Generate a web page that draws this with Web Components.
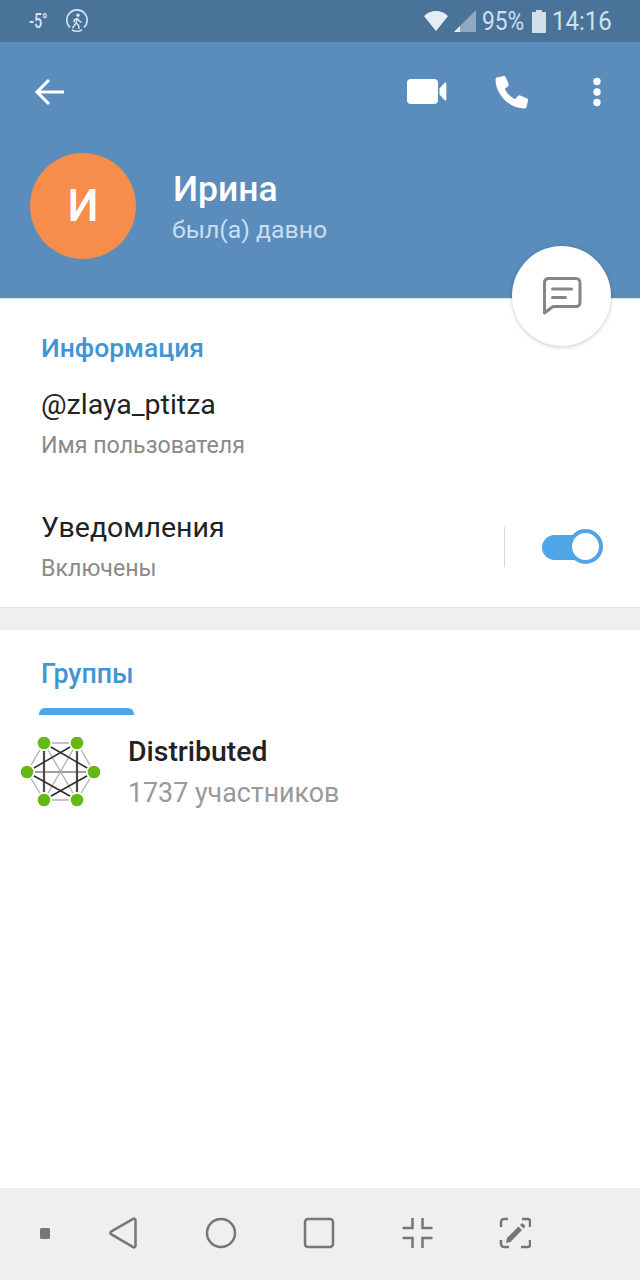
<!DOCTYPE html>
<html>
<head>
<meta charset="utf-8">
<title>Профиль</title>
<style>
	html, body { margin: 0; padding: 0; }
	body {
		width: 640px;
		height: 1280px;
		display: flex;
		flex-direction: column;
		overflow: hidden;
		background: #efefef;
		font-family: Roboto, "Liberation Sans", sans-serif;
	}
	tg-section { flex: none; }
	#groups { flex: 1; }
</style>
</head>
<body>
<tg-status></tg-status>
<tg-header name="Ирина" status="был(а) давно" initial="И"></tg-header>
<tg-section id="info" title="Информация">
	<tg-row label="@zlaya_ptitza" hint="Имя пользователя"></tg-row>
	<tg-row class="notify" label="Уведомления" hint="Включены"><tg-toggle></tg-toggle></tg-row>
</tg-section>
<tg-groups id="groups"></tg-groups>
<tg-nav></tg-nav>

<script>
// Status bar at the top of the phone.
class TgStatus extends HTMLElement {
	constructor() {
		super();
		const shadow = this.attachShadow({mode: 'open'});
		shadow.innerHTML = `
			<style>
				:host { display: flex; flex: none; align-items: center; height: 42px; background: #497399; color: #cfe0ee; padding: 0 28px 0 29px; box-sizing: border-box; }
				.temp { font-size: 20px; font-weight: 500; transform: scaleX(.72); transform-origin: left; width: 36px; color: #d7e4ef; white-space: nowrap; }
				.right { margin-left: auto; display: flex; align-items: center; }
				.pct { font-size: 25px; margin-left: 6px; transform: scaleX(.91); transform-origin: left; width: 42px; white-space: nowrap; }
				.time { font-size: 25px; margin-left: 6px; width: 60px; transform: scaleX(.96); transform-origin: left; white-space: nowrap; }
				svg { display: block; }
			</style>
			<span class="temp">-5°</span>
			<svg width="24" height="24" viewBox="0 0 24 24" fill="none" stroke="#d7e4ef">
				<path d="M5 18.500A10.200 10.200 0 1 1 19 18.500" stroke-width="1.600"/>
				<path d="M7 21a11 11 0 0 0 10 0" stroke-width="1.600"/>
				<circle cx="13" cy="6.200" r="1.700" fill="#d7e4ef" stroke="none"/>
				<path d="M12.500 9l-1.500 5 2.500 2.200.6 3.800M11 14l-1.600 2.400-2 2.600M12.300 9.500l-2.800 1.400-.8 2.400M12.800 9.800l1.400 2.400 2.300 1" stroke-width="1.500"/>
			</svg>
			<div class="right">
				<svg width="24" height="20" viewBox="0 0 24 20"><path d="M.5 5C3.500 2 7.500 .5 12 .5S20.500 2 23.500 5L12 19.500z" fill="#e6eef5" stroke="#e6eef5" stroke-linejoin="round"/></svg>
				<svg width="22" height="22" viewBox="0 0 22 22" style="margin-left:6px"><path d="M22 0v22H0z" fill="#90a9c1"/><path d="M6 16v6H0z" fill="#e6eef5"/></svg>
				<span class="pct">95%</span>
				<svg style="margin-left:8px" width="14" height="23" viewBox="0 0 14 23"><path d="M4 0h6v2h3a1 1 0 0 1 1 1v19a1 1 0 0 1-1 1H1a1 1 0 0 1-1-1V3a1 1 0 0 1 1-1h3z" fill="#d3e0eb"/></svg>
				<span class="time">14:16</span>
			</div>
		`;
	}
}

// Blue header with the avatar, plus the round message button over its edge.
class TgHeader extends HTMLElement {
	constructor() {
		super();
		const shadow = this.attachShadow({mode: 'open'});
		shadow.innerHTML = `
			<style>
				:host { display: block; flex: none; position: relative; height: 256px; background: #5a8dbc; box-shadow: 0 1px 1px rgba(0,0,0,.1); z-index: 1; }
				.bar { display: flex; align-items: center; height: 100px; padding: 0 38px 0 34px; }
				.bar svg { display: block; }
				.actions { margin-left: auto; display: flex; align-items: center; }
				.who { display: flex; align-items: center; padding: 11px 0 0 30px; }
				.avatar { width: 106px; height: 106px; border-radius: 50%; background: #f68d4a; color: #fff; display: flex; align-items: center; justify-content: center; font-size: 44px; font-weight: 500; }
				.text { margin-left: 37px; margin-top: 2px; }
				.name { font-size: 35.500px; font-weight: 500; line-height: 40px; color: #fff; }
				.status { font-size: 24.800px; line-height: 32px; color: #c9def0; margin-top: 5px; margin-left: -1px; }
				.fab { position: absolute; left: 512px; top: 204px; width: 99px; height: 100px; border-radius: 50%; background: #fff; box-shadow: 0 1px 4px rgba(0,0,0,.22); display: flex; align-items: center; justify-content: center; }
			</style>
			<div class="bar">
				<svg width="30" height="28" viewBox="0 0 30 28" fill="none" stroke="#fff" stroke-width="3"><path d="M30 14H4M15 2 3 14 15 26"/></svg>
				<div class="actions">
					<svg width="40" height="26" viewBox="0 0 40 26" fill="#fff"><rect x="0" y="0" width="31" height="25" rx="4"/><path d="M32.500 9.500 38 3.600a1 1 0 0 1 1.300 .8v16.200a1 1 0 0 1-1.300 .8l-5.500-5.900z"/></svg>
					<svg style="margin-left:47px" width="36" height="36" viewBox="0 0 36 36" fill="#fff"><path d="M3 3.500 9.500 2a2 2 0 0 1 2.200 1.200l2.900 6.800a2 2 0 0 1-.5 2.200l-3.300 2.800a23 23 0 0 0 10.300 10.300l2.800-3.400a2 2 0 0 1 2.200-.5l6.700 2.900a2 2 0 0 1 1.200 2.200l-1.500 6.500a2 2 0 0 1-2 1.500C15.500 34.500 1.500 20.500 1.500 5.500a2 2 0 0 1 1.500-2z"/></svg>
					<svg style="margin-left:62px" width="10" height="30" viewBox="0 0 10 30" fill="#fff"><circle cx="5" cy="4.500" r="3.700"/><circle cx="5" cy="15" r="3.700"/><circle cx="5" cy="25.500" r="3.700"/></svg>
				</div>
			</div>
			<div class="who">
				<div class="avatar">${this.getAttribute('initial')}</div>
				<div class="text">
					<div class="name">${this.getAttribute('name')}</div>
					<div class="status">${this.getAttribute('status')}</div>
				</div>
			</div>
			<div class="fab">
				<svg width="40" height="38" viewBox="0 0 40 38" fill="none" stroke="#868686" stroke-width="3" stroke-linejoin="round" stroke-linecap="round">
					<path d="M6 2h28a4 4 0 0 1 4 4v20a4 4 0 0 1-4 4H11l-8.500 6.500V6A4 4 0 0 1 6 2z" transform="translate(0 -.5)"/>
					<path d="M10.500 12h19M10.500 20.500h13"/>
				</svg>
			</div>
		`;
	}
}

// White card with a blue heading.
class TgSection extends HTMLElement {
	constructor() {
		super();
		const shadow = this.attachShadow({mode: 'open'});
		shadow.innerHTML = `
			<style>
				:host { display: block; height: 310px; background: #fff; border-bottom: 1px solid #e2e2e2; box-sizing: border-box; padding-top: 33px; overflow: hidden; }
				h2 { margin: 0 0 1px 41px; font-size: 26.500px; line-height: 34px; font-weight: 500; color: #3f96d4; }
			</style>
			<h2>${this.getAttribute('title')}</h2>
			<slot></slot>
		`;
	}
}

// Two line row, optional control on the right.
class TgRow extends HTMLElement {
	constructor() {
		super();
		const shadow = this.attachShadow({mode: 'open'});
		shadow.innerHTML = `
			<style>
				:host { display: flex; align-items: center; height: 123px; padding-left: 41px; box-sizing: border-box; }
				.label { font-size: 28.500px; line-height: 36px; color: #222; padding-top: 21px; }
				.hint { font-size: 23.200px; line-height: 30px; color: #8a8a8a; margin-top: 7px; }
				.text { flex: 1; align-self: flex-start; }
				.ctl { flex: none; }
			</style>
			<div class="text">
				<div class="label">${this.getAttribute('label')}</div>
				<div class="hint">${this.getAttribute('hint')}</div>
			</div>
			<div class="ctl"><slot></slot></div>
		`;
	}
}

// Divider and on/off switch of the notification row.
class TgToggle extends HTMLElement {
	constructor() {
		super();
		const shadow = this.attachShadow({mode: 'open'});
		shadow.innerHTML = `
			<style>
				:host { display: flex; align-items: center; height: 40px; padding-right: 37px; margin-top: -7px; }
				.sep { width: 1px; height: 40px; background: #d8d8d8; margin-right: 37px; }
				.track { position: relative; width: 50px; height: 25px; border-radius: 13px; background: #4fa6e6; margin-right: 11px; }
				.knob { position: absolute; right: -11px; top: -6px; width: 27px; height: 27px; border: 4px solid #4fa6e6; border-radius: 50%; background: #fff; }
			</style>
			<div class="sep"></div>
			<div class="track"><div class="knob"></div></div>
		`;
	}
}

// Hexagon graph used as the group picture.
class TgGraphLogo extends HTMLElement {
	constructor() {
		super();
		const shadow = this.attachShadow({mode: 'open'});
		const pts = [[23, 6], [56, 6], [73, 35], [56, 63], [23, 63], [6, 35]];
		const dark = [[0, 2], [1, 5], [2, 4], [3, 5]];
		const mid = [[0, 4], [1, 3]];
		const light = [[0, 1], [1, 2], [2, 3], [3, 4], [4, 5], [5, 0], [0, 3], [1, 4]];
		const line = (p, color, w) => `<line x1="${pts[p[0]][0]}" y1="${pts[p[0]][1]}" x2="${pts[p[1]][0]}" y2="${pts[p[1]][1]}" stroke="${color}" stroke-width="${w}"/>`;
		shadow.innerHTML = `
			<style>
				:host { display: block; width: 79px; height: 70px; }
				svg { display: block; }
			</style>
			<svg width="79" height="70" viewBox="0 0 79 70">
				${light.map(p => line(p, '#b0b0b0', 1.3)).join('')}
				${line([5, 2], '#a0a0a0', 2)}
				${mid.map(p => line(p, '#4a4a4a', 2.2)).join('')}
				${dark.map(p => line(p, '#2c2c2c', 1.5)).join('')}
				${pts.map(p => `<circle cx="${p[0]}" cy="${p[1]}" r="8" fill="#fff"/><circle cx="${p[0]}" cy="${p[1]}" r="6.300" fill="#66b814"/>`).join('')}
			</svg>
		`;
	}
}

// Groups tab with the list under it.
class TgGroups extends HTMLElement {
	constructor() {
		super();
		const shadow = this.attachShadow({mode: 'open'});
		shadow.innerHTML = `
			<style>
				:host { display: block; background: #fff; margin-top: 22px; }
				.tab { margin: 0 0 0 39px; width: 95px; height: 85px; box-sizing: border-box; padding: 27px 0 0 2px; font-size: 26.800px; line-height: 34px; font-weight: 500; color: #3f96d4; position: relative; white-space: nowrap; }
				.tab::after { content: ""; position: absolute; left: 0; right: 0; bottom: 0; height: 7px; background: #4fa6e6; border-radius: 6px 6px 0 0; }
				.group { display: flex; padding: 22px 0 0 21px; }
				.text { margin-left: 28px; margin-top: -3px; }
				.title { font-size: 28.400px; line-height: 36px; font-weight: 500; color: #222; }
				.count { font-size: 26.800px; line-height: 34px; color: #999; margin-top: 6px; }
			</style>
			<div class="tab">Группы</div>
			<div class="group">
				<tg-graph-logo></tg-graph-logo>
				<div class="text">
					<div class="title">Distributed</div>
					<div class="count">1737 участников</div>
				</div>
			</div>
		`;
	}
}

// Android navigation bar.
class TgNav extends HTMLElement {
	constructor() {
		super();
		const shadow = this.attachShadow({mode: 'open'});
		shadow.innerHTML = `
			<style>
				:host { display: flex; flex: none; align-items: center; height: 92px; background: #efefef; box-sizing: border-box; padding: 0 0 2px 39px; }
				svg { display: block; flex: none; }
			</style>
			<svg width="12" height="13" viewBox="0 0 12 13"><rect x="1" y="1" width="10" height="11" rx="1.500" fill="#767676"/></svg>
			<svg style="margin-left:57px" width="30" height="32" viewBox="0 0 30 32" fill="none" stroke="#767676" stroke-width="2.500" stroke-linejoin="round"><path d="M27.500 3v26a1.500 1.500 0 0 1-2.300 1.200L3 17.200a1.500 1.500 0 0 1 0-2.500L25.200 1.800A1.500 1.500 0 0 1 27.500 3z"/></svg>
			<svg style="margin-left:67px" width="32" height="32" viewBox="0 0 32 32" fill="none" stroke="#767676" stroke-width="2.500"><circle cx="16" cy="16" r="14"/></svg>
			<svg style="margin-left:66px" width="32" height="32" viewBox="0 0 32 32" fill="none" stroke="#767676" stroke-width="2.500"><rect x="2" y="2" width="28" height="28" rx="3"/></svg>
			<svg style="margin-left:66px" width="32" height="32" viewBox="0 0 32 32" fill="none" stroke="#767676" stroke-width="2.500"><path d="M11.500 1v10H1.500M21.500 1v10h10M1.500 21h10v10M31.500 21h-10v10"/></svg>
			<svg style="margin-left:66px" width="32" height="32" viewBox="0 0 32 32" fill="none" stroke="#767676" stroke-width="2.500"><path d="M9 2H5a3 3 0 0 0-3 3v5M23 2h6a2 2 0 0 1 2 2v6M2 23v4a3 3 0 0 0 3 3h5M31 23v5a2 2 0 0 1-2 2h-7"/><path d="M7 26l1-5L19.500 9.500l3.500 3.500L11.500 25z" fill="#767676" stroke="none"/><path d="M21 8l1.500-1.500a1 1 0 0 1 1.400 0l2 2a1 1 0 0 1 0 1.400L24.500 11.500z" fill="#767676" stroke="none"/></svg>
		`;
	}
}

customElements.define('tg-status', TgStatus);
customElements.define('tg-header', TgHeader);
customElements.define('tg-section', TgSection);
customElements.define('tg-row', TgRow);
customElements.define('tg-toggle', TgToggle);
customElements.define('tg-graph-logo', TgGraphLogo);
customElements.define('tg-groups', TgGroups);
customElements.define('tg-nav', TgNav);
</script>
</body>
</html>
